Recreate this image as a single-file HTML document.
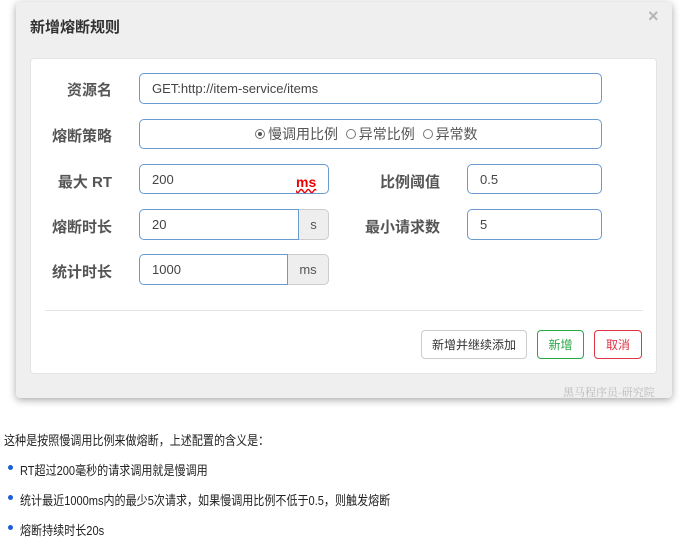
<!DOCTYPE html>
<html><head><meta charset="utf-8"><style>
*{box-sizing:border-box;margin:0;padding:0}
body{width:694px;height:552px;background:#fff;position:relative;overflow:hidden;font-family:"Liberation Sans","Noto Sans CJK SC",sans-serif;color:#333}
.a{position:absolute}
.dlg{left:16px;top:2px;width:656px;height:396px;background:#efefef;border-radius:4px;box-shadow:0 2px 8px rgba(0,0,0,.35)}
.title{left:30px;top:16px;font-size:15px;font-weight:bold;color:#333}
.x{left:648px;top:6px;font-size:18px;color:#b5b5b5;font-weight:bold}
.panel{left:30px;top:58px;width:627px;height:316px;background:#fff;border:1px solid #e4e4e4;border-radius:4px}
.lbl{font-size:15px;font-weight:bold;color:#555;text-align:right}
.in{border:1px solid #6a9bd0;border-radius:5px;background:#fff;font-size:13px;color:#444;padding-left:12px;display:flex;align-items:center}
.add{background:#eee;border:1px solid #ccc;border-left:none;border-radius:0 5px 5px 0;font-size:13px;color:#555;display:flex;align-items:center;justify-content:center}
.btn{border:1px solid #ccc;border-radius:4px;font-size:12px;display:flex;align-items:center;justify-content:center;background:#fff}
.rd{display:inline-block;width:10px;height:10px;border:1px solid #777;border-radius:50%;margin-right:3px;vertical-align:0px;position:relative}
.t{font-size:13px;color:#222;transform:scaleX(0.85);transform-origin:left;white-space:nowrap}
.dot{width:5px;height:5px;border-radius:50%;background:#1a5fd6}
</style></head><body>
<div class="a dlg"></div>
<div class="a title">新增熔断规则</div>
<div class="a x">×</div>
<div class="a panel"></div>

<div class="a lbl" style="left:40px;top:79px;width:72px">资源名</div>
<div class="a in" style="left:139px;top:73px;width:463px;height:31px">GET:http://item-service/items</div>

<div class="a lbl" style="left:40px;top:125px;width:72px">熔断策略</div>
<div class="a in" style="left:139px;top:119px;width:463px;height:30px;justify-content:flex-start;padding-left:115px;font-size:14px;color:#555">
<span class="rd"><span style="position:absolute;left:2px;top:2px;width:4px;height:4px;border-radius:50%;background:#555"></span></span>慢调用比例&nbsp;&nbsp;<span class="rd"></span>异常比例&nbsp;&nbsp;<span class="rd"></span>异常数</div>

<div class="a lbl" style="left:40px;top:171px;width:72px">最大 RT</div>
<div class="a in" style="left:139px;top:164px;width:190px;height:30px">200</div>
<div class="a" style="left:296px;top:174px;font-size:14px;font-weight:bold;color:#e00;text-decoration:underline wavy #e00">ms</div>
<div class="a lbl" style="left:360px;top:171px;width:80px">比例阈值</div>
<div class="a in" style="left:467px;top:164px;width:135px;height:30px">0.5</div>

<div class="a lbl" style="left:40px;top:216px;width:72px">熔断时长</div>
<div class="a in" style="left:139px;top:209px;width:160px;height:31px;border-radius:5px 0 0 5px">20</div>
<div class="a add" style="left:299px;top:209px;width:30px;height:31px">s</div>
<div class="a lbl" style="left:360px;top:216px;width:80px">最小请求数</div>
<div class="a in" style="left:467px;top:209px;width:135px;height:31px">5</div>

<div class="a lbl" style="left:40px;top:261px;width:72px">统计时长</div>
<div class="a in" style="left:139px;top:254px;width:149px;height:31px;border-radius:5px 0 0 5px">1000</div>
<div class="a add" style="left:288px;top:254px;width:41px;height:31px">ms</div>

<div class="a" style="left:45px;top:310px;width:598px;height:1px;background:#e5e5e5"></div>
<div class="a btn" style="left:421px;top:330px;width:106px;height:29px;color:#333">新增并继续添加</div>
<div class="a btn" style="left:537px;top:330px;width:47px;height:29px;color:#28a745;border-color:#28a745">新增</div>
<div class="a btn" style="left:594px;top:330px;width:48px;height:29px;color:#dc3545;border-color:#dc3545">取消</div>
<div class="a" style="left:563px;top:384px;font-size:11px;color:#bbb;font-family:'Noto Serif CJK SC',serif">黑马程序员-研究院</div>

<div class="a t" style="left:4px;top:430px">这种是按照慢调用比例来做熔断，上述配置的含义是：</div>
<div class="a dot" style="left:8px;top:465px"></div>
<div class="a t" style="left:20px;top:460px">RT超过200毫秒的请求调用就是慢调用</div>
<div class="a dot" style="left:8px;top:495px"></div>
<div class="a t" style="left:20px;top:490px">统计最近1000ms内的最少5次请求，如果慢调用比例不低于0.5，则触发熔断</div>
<div class="a dot" style="left:8px;top:525px"></div>
<div class="a t" style="left:20px;top:520px">熔断持续时长20s</div>
</body></html>
